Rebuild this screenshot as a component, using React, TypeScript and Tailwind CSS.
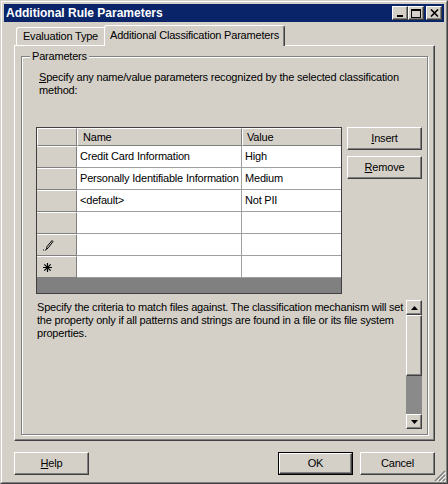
import React from "react";

const font = { fontFamily: '"Liberation Sans", Arial, sans-serif' };

const raised =
  "border border-t-white border-l-white border-r-[#404040] border-b-[#404040] shadow-[inset_-1px_-1px_0_#808080] bg-[#d4d0c8]";

function TitleButton({ children }: { children: React.ReactNode }) {
  return <div className={`w-[16px] h-[14px] flex items-center justify-center ${raised}`}>{children}</div>;
}

function PushButton({ label, ul, rest, def }: { label?: string; ul?: string; rest?: string; def?: boolean }) {
  const inner = (
    <div className={`w-full h-full flex items-center justify-center text-[11px] text-black ${raised}`}>
      {ul ? <u>{ul}</u> : null}
      {rest}
      {label}
    </div>
  );
  if (def) return <div className="w-[75px] h-[23px] border border-black">{inner}</div>;
  return <div className="w-[75px] h-[23px]">{inner}</div>;
}

function RowHead({ icon }: { icon?: "pencil" | "star" }) {
  return (
    <div className="w-[40px] h-full flex items-center pl-[5px] bg-[#d4d0c8] border-t border-t-white border-b border-b-[#808080] border-r border-r-[#808080]">
      {icon === "pencil" && (
        <svg width="12" height="12" viewBox="0 0 12 12">
          <path d="M1 11h1M3 11h1" stroke="#000" strokeWidth="1" />
          <path d="M4.5 10.5 L5 7.5 L10 1.5 L11 2.5 L6.5 8.5 Z" fill="none" stroke="#000" strokeWidth="1" />
        </svg>
      )}
      {icon === "star" && (
        <svg width="11" height="11" viewBox="0 0 11 11">
          <path d="M5.5 1v9M1 5.5h9M2.3 2.3l6.4 6.4M8.7 2.3l-6.4 6.4" stroke="#000" strokeWidth="1.2" />
        </svg>
      )}
    </div>
  );
}

const rows: { name: string; value: string; icon?: "pencil" | "star" }[] = [
  { name: "Credit Card Information", value: "High" },
  { name: "Personally Identifiable Information", value: "Medium" },
  { name: "<default>", value: "Not PII" },
  { name: "", value: "" },
  { name: "", value: "", icon: "pencil" },
  { name: "", value: "", icon: "star" },
];

export default function App() {
  return (
    <div
      className="w-[448px] h-[484px] bg-[#d4d0c8] border border-t-[#d4d0c8] border-l-[#d4d0c8] border-r-[#404040] border-b-[#404040] text-black tracking-[-0.2px]"
      style={font}
    >
      <div className="w-full h-full border border-t-white border-l-white border-r-[#808080] border-b-[#808080] p-[2px] flex flex-col relative">
        {/* title bar */}
        <div className="h-[18px] bg-[#0a246a] flex items-center pl-[2px] pr-[2px]">
          <span className="text-white font-bold text-[12px] tracking-[0px] flex-1">Additional Rule Parameters</span>
          <div className="flex items-center">
            <TitleButton>
              <svg width="8" height="8" viewBox="0 0 8 8">
                <rect x="1" y="6" width="6" height="2" fill="#000" />
              </svg>
            </TitleButton>
            <TitleButton>
              <svg width="10" height="9" viewBox="0 0 10 9">
                <rect x="0.5" y="0.5" width="9" height="8" fill="none" stroke="#000" />
                <rect x="0" y="0" width="10" height="2" fill="#000" />
              </svg>
            </TitleButton>
            <div className="w-[2px]" />
            <TitleButton>
              <svg width="9" height="8" viewBox="0 0 9 8">
                <path d="M1 0.5l7 7M8 0.5l-7 7" stroke="#000" strokeWidth="1.6" />
              </svg>
            </TitleButton>
          </div>
        </div>

        {/* tabs */}
        <div className="mt-[3px] ml-[10px] h-[20px] flex items-end">
          <div className="ml-[2px] w-[88px] h-[18px] border-t border-l border-t-white border-l-white rounded-tl-[3px] flex items-center justify-center text-[11px]">
            Evaluation Type
          </div>
          <div className="relative z-10 -mb-px w-[181px] h-[21px] bg-[#d4d0c8] border-t border-l border-r border-t-white border-l-white border-r-[#404040] rounded-t-[3px] shadow-[inset_-1px_0_0_#808080] flex items-center justify-center text-[11px] pb-[2px]">
            Additional Classification Parameters
          </div>
        </div>

        {/* tab panel */}
        <div className="ml-[10px] w-[421px] h-[396px] border border-t-white border-l-white border-r-[#404040] border-b-[#404040] shadow-[inset_-1px_-1px_0_#808080]">
          <div className="relative ml-[6px] mt-[10px] w-[407px] h-[379px] border border-[#808080] shadow-[inset_1px_1px_0_#fff,1px_1px_0_#fff]">
            <span className="absolute -top-[8px] left-[8px] px-[2px] bg-[#d4d0c8] text-[11px] leading-[14px]">
              Parameters
            </span>
            <div className="pl-[17px] pt-[14px] text-[11px] leading-[13px]">
              <u>S</u>pecify any name/value parameters recognized by the selected classification
              <br />
              method:
            </div>

            <div className="flex items-start ml-[14px] mt-[30px]">
              {/* grid */}
              <div className="w-[306px] h-[167px] border border-[#404040] flex flex-col text-[11px]">
                <div className="h-[18px] flex shrink-0">
                  <div className="w-[40px] h-full bg-[#d4d0c8] border-t border-l border-t-white border-l-white border-r border-b border-r-[#808080] border-b-[#808080]" />
                  <div className="w-[165px] h-full bg-[#d4d0c8] border-t border-l border-t-white border-l-white border-r border-b border-r-[#808080] border-b-[#808080] pl-[5px] flex items-center">
                    Name
                  </div>
                  <div className="flex-1 h-full bg-[#d4d0c8] border-t border-l border-t-white border-l-white border-b border-b-[#808080] pl-[4px] flex items-center">
                    Value
                  </div>
                </div>
                {rows.map((r, i) => (
                  <div key={i} className="h-[22px] flex shrink-0">
                    <RowHead icon={r.icon} />
                    <div className="w-[165px] h-full bg-white border-r border-b border-[#a0a0a0] pl-[3px] flex items-center whitespace-nowrap">
                      {r.name}
                    </div>
                    <div className="flex-1 h-full bg-white border-b border-[#a0a0a0] pl-[3px] flex items-center">
                      {r.value}
                    </div>
                  </div>
                ))}
                <div className="flex-1 bg-[#808080]" />
              </div>

              <div className="ml-[5px] flex flex-col gap-[6px]">
                <PushButton ul="I" rest="nsert" />
                <PushButton ul="R" rest="emove" />
              </div>
            </div>

            <div className="flex ml-[15px] mt-[6px] mr-[5px]">
              <div className="flex-1 pt-[1px] text-[11px] leading-[13px]">
                Specify the criteria to match files against. The classification mechanism will set
                <br />
                the property only if all patterns and strings are found in a file or its file system
                <br />
                properties.
              </div>
              <div className="w-[16px] h-[129px] flex flex-col">
                <div className={`h-[15px] flex items-center justify-center ${raised}`}>
                  <svg width="7" height="4" viewBox="0 0 7 4">
                    <path d="M3.5 0L7 4H0Z" fill="#000" />
                  </svg>
                </div>
                <div className={`h-[61px] ${raised}`} />
                <div className="flex-1 bg-[#8a8a8a]" />
                <div className={`h-[15px] flex items-center justify-center ${raised}`}>
                  <svg width="7" height="4" viewBox="0 0 7 4">
                    <path d="M0 0H7L3.5 4Z" fill="#000" />
                  </svg>
                </div>
              </div>
            </div>
          </div>
        </div>

        {/* bottom buttons */}
        <div className="mt-[11px] ml-[10px] mr-[9px] flex items-center">
          <PushButton ul="H" rest="elp" />
          <div className="flex-1" />
          <PushButton label="OK" def />
          <div className="w-[7px]" />
          <PushButton label="Cancel" />
        </div>

        {/* size grip */}
        <svg className="absolute right-0 bottom-0" width="12" height="12" viewBox="0 0 12 12">
          <path d="M11 1L1 11M11 5L5 11M11 9L9 11" stroke="#808080" strokeWidth="1.5" />
          <path d="M12 2L2 12M12 6L6 12M12 10L10 12" stroke="#fff" strokeWidth="0.8" />
        </svg>
      </div>
    </div>
  );
}
